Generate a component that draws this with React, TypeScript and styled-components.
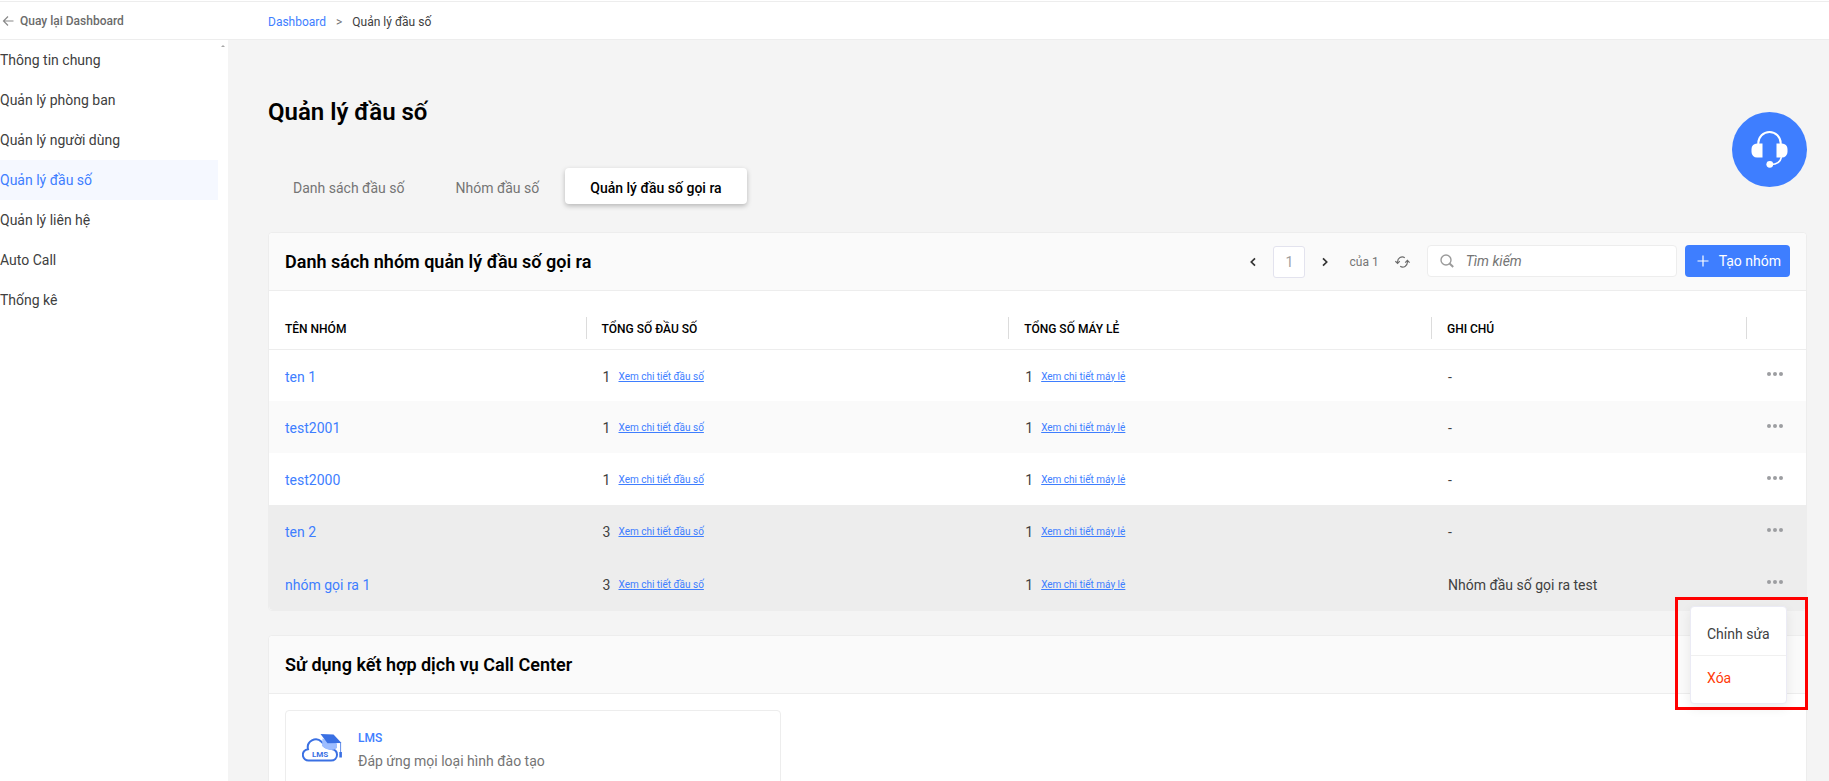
import React from "react";
import styled, { createGlobalStyle } from "styled-components";

const blue = "#3e7eff";
const line = "#ededed";

const GlobalStyle = createGlobalStyle`
  * { box-sizing: border-box; }
  body {
    margin: 0;
    background: #fff;
    color: #404040;
    font: 14px/20px Roboto, "Noto Sans", sans-serif;
  }
  button, input { font: inherit; color: inherit; margin: 0; padding: 0; border: 0; background: none; }
  button { cursor: pointer; }
  a { color: ${blue}; text-decoration: none; }
`;

const Page = styled.div`
  display: flex;
  flex-direction: column;
  height: 100vh;
  padding-top: 1px;
`;

const TopBar = styled.header`
  flex: none;
  display: flex;
  align-items: center;
  height: 39px;
  border-top: 1px solid ${line};
  border-bottom: 1px solid ${line};
  font-size: 12px;
`;

const BackLink = styled.a`
  display: flex;
  align-items: center;
  gap: 6px;
  width: 268px;
  padding-left: 2px;
  color: #6b6b6b;
  font-weight: 500;
`;

const Breadcrumb = styled.nav`
  display: flex;
  gap: 10px;
  padding-top: 2px;
  color: #404040;
`;

const Separator = styled.span`
  color: #757575;
`;

const Body = styled.div`
  flex: 1;
  display: flex;
  min-height: 0;
`;

const Sidebar = styled.nav`
  flex: none;
  display: flex;
  align-items: flex-start;
  width: 228px;
`;

const MenuList = styled.div`
  flex: 1;
`;

const MenuItem = styled.a<{ $active?: boolean }>`
  display: block;
  line-height: 40px;
  color: ${(p) => (p.$active ? blue : "#404040")};
  background: ${(p) => (p.$active ? "#f5f8ff" : "transparent")};
`;

const ScrollArrow = styled.span`
  width: 10px;
  padding: 5px 3px;
  svg { display: block; }
`;

const Main = styled.main`
  flex: 1;
  min-width: 0;
  overflow-y: auto;
  scrollbar-width: none;
  padding: 56px 22px 24px 40px;
  background: #f4f4f4;
`;

const Title = styled.h1`
  margin: 0;
  font-size: 24px;
  line-height: 32px;
  font-weight: 600;
  color: #000;
`;

const Tabs = styled.div`
  display: flex;
  gap: 1px;
  height: 40px;
  margin: 40px 0 24px;
`;

const Tab = styled.button<{ $active?: boolean }>`
  height: 36px;
  padding: 3px 25px 0;
  border-radius: 4px;
  color: ${(p) => (p.$active ? "#000" : "#757575")};
  font-weight: ${(p) => (p.$active ? 500 : 400)};
  background: ${(p) => (p.$active ? "#fff" : "transparent")};
  box-shadow: ${(p) => (p.$active ? "0 2px 5px rgba(0, 0, 0, 0.25)" : "none")};
`;

const Card = styled.section`
  margin-bottom: 24px;
  border: 1px solid ${line};
  border-radius: 4px;
  background: #fff;
`;

const CardHeader = styled.div`
  display: flex;
  align-items: center;
  justify-content: space-between;
  height: 58px;
  padding: 0 16px 1px;
  border-bottom: 1px solid ${line};
  border-radius: 4px 4px 0 0;
  background: #fafafa;
`;

const CardTitle = styled.h2`
  margin: 0;
  padding-top: 2px;
  font-size: 18px;
  line-height: 24px;
  font-weight: 600;
  color: #000;
`;

const Toolbar = styled.div`
  display: flex;
  align-items: flex-start;
  gap: 8px;
  height: 32px;
`;

const Pager = styled.div`
  display: flex;
  align-items: center;
  margin-right: 8px;
  padding-top: 1px;
  font-size: 12px;
  color: #757575;
`;

const IconButton = styled.button`
  display: flex;
  align-items: center;
  justify-content: center;
  width: 16px;
  height: 32px;
`;

const PageInput = styled.input`
  width: 32px;
  height: 32px;
  margin: 0 12px;
  border: 1px solid #e3e3ee;
  border-radius: 3px;
  background: #fff;
  font-size: 14px;
  text-align: center;
  color: #a0a0a0;
`;

const PageCount = styled.span`
  margin: 0 16px;
`;

const SearchBox = styled.label`
  display: flex;
  align-items: center;
  gap: 12px;
  width: 250px;
  height: 32px;
  padding: 0 12px;
  border: 1px solid ${line};
  border-radius: 4px;
  background: #fff;
`;

const SearchInput = styled.input`
  flex: 1;
  min-width: 0;
  outline: none;
  &::placeholder { color: #757575; font-style: italic; opacity: 1; }
`;

const PrimaryButton = styled.button`
  display: flex;
  align-items: center;
  gap: 10px;
  height: 32px;
  padding: 0 9px 0 12px;
  border-radius: 4px;
  background: ${blue};
  color: #fff;
`;

const Table = styled.table`
  width: 100%;
  table-layout: fixed;
  border-collapse: separate;
  border-spacing: 0;
`;

const HeadCell = styled.th`
  padding: 26px 0 10px;
  text-align: left;
`;

const HeadLabel = styled.div<{ $divided?: boolean }>`
  height: 22px;
  padding-left: 15px;
  border-left: 1px solid ${(p) => (p.$divided ? "#dcdcdc" : "transparent")};
  font-size: 12px;
  line-height: 24px;
  font-weight: 500;
  color: #000;
`;

const Row = styled.tr<{ $tone: string }>`
  background: ${(p) => p.$tone};
`;

const Cell = styled.td`
  position: relative;
  height: 52px;
  padding: 2px 0 0 17px;
  &:first-child { padding-left: 16px; }
  ${Row}:first-child & { border-top: 1px solid ${line}; }
  ${Row}:last-child & { height: 53px; }
  ${Row}:last-child &:first-child { border-bottom-left-radius: 4px; }
  ${Row}:last-child &:last-child { border-bottom-right-radius: 4px; }
`;

const Count = styled.span`
  display: flex;
  align-items: center;
  gap: 8px;
`;

const DetailLink = styled.a`
  font-size: 10px;
  text-decoration: underline;
`;

const MoreButton = styled.button`
  display: block;
  height: 20px;
  padding: 0 4px 6px;
  line-height: 0;
`;

const Highlight = styled.div`
  position: absolute;
  z-index: 2;
  top: 40px;
  right: -2px;
  padding: 6px 18px 3px 12px;
  border: 3px solid #f00;
`;

const Popup = styled.div`
  width: 97px;
  padding: 4px 0;
  border: 1px solid #ebebf5;
  border-radius: 4px;
  background: #fff;
  box-shadow: 0 4px 12px rgba(0, 0, 0, 0.08);
`;

const PopupItem = styled.button<{ $danger?: boolean }>`
  display: block;
  width: 100%;
  height: 44px;
  padding: 1px 16px 0;
  text-align: left;
  white-space: nowrap;
  color: ${(p) => (p.$danger ? "#ff3b0a" : "#404040")};
  & + & { border-top: 1px solid #f0f0f0; }
`;

const Services = styled.div`
  display: grid;
  grid-template-columns: repeat(3, 1fr);
  gap: 8px;
  padding: 16px;
`;

const Service = styled.a`
  display: flex;
  align-items: center;
  gap: 16px;
  padding: 16px;
  border: 1px solid ${line};
  border-radius: 4px;
`;

const ServiceLogo = styled.svg`
  flex: none;
  margin-bottom: 4px;
`;

const ServiceName = styled.strong`
  display: block;
  font-size: 12px;
  line-height: 22px;
  font-weight: 500;
`;

const ServiceText = styled.span`
  display: block;
  line-height: 24px;
  color: #757575;
`;

const SupportButton = styled.button`
  position: fixed;
  top: 112px;
  right: 22px;
  width: 75px;
  height: 75px;
  border-radius: 50%;
  background: ${blue};
  line-height: 0;
`;

const Chevron = ({ right }: { right?: boolean }) => (
  <svg width="6" height="10" viewBox="0 0 6 10" fill="none" stroke="#333" strokeWidth="1.7">
    <path d={right ? "M1 1.3 4.7 5 1 8.7" : "M5 1.3 1.3 5 5 8.7"} />
  </svg>
);

const Refresh = () => (
  <svg width="15" height="12" viewBox="0 0 15 12" fill="none" stroke="#6b6b6b" strokeWidth="1.2">
    <path d="M2.6 7V5.8A4.7 4.7 0 0 1 9.8 1.7M12.4 5v1.2a4.7 4.7 0 0 1-7.2 4.1" />
    <path d="M.4 5.2 2.6 7.4 4.8 5.2M10.2 6.6 12.4 4.4 14.6 6.6" />
  </svg>
);

const SearchIcon = () => (
  <svg width="14" height="14" viewBox="0 0 14 14" fill="none" stroke="#9b9b9b" strokeWidth="1.4">
    <circle cx="6" cy="6" r="5" />
    <path d="m9.6 9.6 3.6 3.4" strokeWidth="2" />
  </svg>
);

const Dots = () => (
  <svg width="16" height="4" viewBox="0 0 16 4" fill="#9c9ea1">
    <circle cx="2" cy="2" r="2" />
    <circle cx="8" cy="2" r="2" />
    <circle cx="14" cy="2" r="2" />
  </svg>
);

const Headset = () => (
  <svg width="37" height="37" viewBox="0 0 37 37" fill="#fff">
    <path d="M7.3 13V12.2A11 11 0 0 1 29.7 12.2V13" fill="none" stroke="#fff" strokeWidth="2" />
    <path d="M11.5 12.5v14H6A5.5 5.5 0 0 1 .5 21v-3A5.5 5.5 0 0 1 6 12.5zM25.5 12.5v14H31a5.5 5.5 0 0 0 5.5-5.5v-3a5.5 5.5 0 0 0-5.5-5.5z" />
    <path d="M30.500 26c-1 4.500-5 7.500-10.500 7.500" fill="none" stroke="#fff" strokeWidth="1.6" />
    <circle cx="18.8" cy="33.3" r="3.4" />
  </svg>
);

const LmsLogo = () => (
  <ServiceLogo width="40" height="30" viewBox="0 0 40 30">
    <path
      d="M8 27.500H7A5.600 5.600 0 0 1 6 16.200 8 8 0 0 1 19.500 8.800c2 1.200 3 3 3.500 5.200l6.500 2c3.500.5 5.500 2.700 5.500 5.700 0 3.500-2.600 5.800-6 5.800z"
      fill="#fff" stroke="#3a70e3" strokeWidth="2"
    />
    <path d="M20.500 5.500 35 10.500V15c-3.500 3-10.500 2.500-15-2z" fill="#9dbdff" />
    <path d="M18.500 1 31.500 1.500 39.500 10 25.500 10.200z" fill="#3a70e3" />
    <path d="M38.600 10v10" stroke="#3a70e3" strokeWidth="0.8" />
    <path d="M37.300 19h2.600v5.500h-2.600z" fill="#3a70e3" />
    <text x="10" y="24" fontSize="8" fontWeight="700" fontFamily="Roboto" fill="#3a70e3">LMS</text>
  </ServiceLogo>
);

const menu = [
  "Thông tin chung",
  "Quản lý phòng ban",
  "Quản lý người dùng",
  "Quản lý đầu số",
  "Quản lý liên hệ",
  "Auto Call",
  "Thống kê",
];

const tabs = ["Danh sách đầu số", "Nhóm đầu số", "Quản lý đầu số gọi ra"];

const columns = [
  { label: "TÊN NHÓM", width: "20.6%" },
  { label: "TỔNG SỐ ĐẦU SỐ", width: "27.5%" },
  { label: "TỔNG SỐ MÁY LẺ", width: "27.5%" },
  { label: "GHI CHÚ", width: "20.5%" },
  { label: "", width: "3.9%" },
];

const groups = [
  { name: "ten 1", numbers: 1, phones: 1, note: "-", tone: "#fff" },
  { name: "test2001", numbers: 1, phones: 1, note: "-", tone: "#fafafa" },
  { name: "test2000", numbers: 1, phones: 1, note: "-", tone: "#fff" },
  { name: "ten 2", numbers: 3, phones: 1, note: "-", tone: "#ededed" },
  { name: "nhóm gọi ra 1", numbers: 3, phones: 1, note: "Nhóm đầu số gọi ra test", tone: "#ededed", open: true },
];

export default function App() {
  return (
    <Page>
      <GlobalStyle />
      <TopBar>
        <BackLink href="#">
          <svg width="12" height="12" viewBox="0 0 12 12" fill="none" stroke="#8a8a8a" strokeWidth="1.2">
            <path d="M11.500 6H1.500M6 1.500 1.500 6 6 10.500" />
          </svg>
          Quay lại Dashboard
        </BackLink>
        <Breadcrumb>
          <a href="#">Dashboard</a>
          <Separator>&gt;</Separator>
          <span>Quản lý đầu số</span>
        </Breadcrumb>
      </TopBar>
      <Body>
        <Sidebar>
          <MenuList>
            {menu.map((item) => (
              <MenuItem key={item} href="#" $active={item === "Quản lý đầu số"}>{item}</MenuItem>
            ))}
          </MenuList>
          <ScrollArrow>
            <svg width="4" height="2" viewBox="0 0 4 2" fill="#a8a8a8"><path d="M2 0 4 2H0z" /></svg>
          </ScrollArrow>
        </Sidebar>
        <Main>
          <Title>Quản lý đầu số</Title>
          <Tabs>
            {tabs.map((tab, i) => <Tab key={tab} type="button" $active={i === 2}>{tab}</Tab>)}
          </Tabs>
          <Card>
            <CardHeader>
              <CardTitle>Danh sách nhóm quản lý đầu số gọi ra</CardTitle>
              <Toolbar>
                <Pager>
                  <IconButton type="button" aria-label="Trang trước"><Chevron /></IconButton>
                  <PageInput aria-label="Trang" defaultValue="1" />
                  <IconButton type="button" aria-label="Trang sau"><Chevron right /></IconButton>
                  <PageCount>của 1</PageCount>
                  <IconButton type="button" aria-label="Tải lại"><Refresh /></IconButton>
                </Pager>
                <SearchBox>
                  <SearchIcon />
                  <SearchInput aria-label="Tìm kiếm" placeholder="Tìm kiếm" />
                </SearchBox>
                <PrimaryButton type="button">
                  <svg width="12" height="12" viewBox="0 0 12 12" stroke="#fff" strokeWidth="1.2">
                    <path d="M6 .5v11M.5 6h11" />
                  </svg>
                  Tạo nhóm
                </PrimaryButton>
              </Toolbar>
            </CardHeader>
            <Table>
              <colgroup>
                {columns.map((c) => <col key={c.label} style={{ width: c.width }} />)}
              </colgroup>
              <thead>
                <tr>
                  {columns.map((c, i) => (
                    <HeadCell key={c.label} scope="col">
                      <HeadLabel $divided={i > 0}>{c.label}</HeadLabel>
                    </HeadCell>
                  ))}
                </tr>
              </thead>
              <tbody>
                {groups.map((g) => (
                  <Row key={g.name} $tone={g.tone}>
                    <Cell><a href="#">{g.name}</a></Cell>
                    <Cell><Count>{g.numbers}<DetailLink href="#">Xem chi tiết đầu số</DetailLink></Count></Cell>
                    <Cell><Count>{g.phones}<DetailLink href="#">Xem chi tiết máy lẻ</DetailLink></Count></Cell>
                    <Cell>{g.note}</Cell>
                    <Cell>
                      <MoreButton type="button" aria-label="Thao tác"><Dots /></MoreButton>
                      {g.open && (
                        <Highlight>
                          <Popup>
                            <PopupItem type="button">Chỉnh sửa</PopupItem>
                            <PopupItem type="button" $danger>Xóa</PopupItem>
                          </Popup>
                        </Highlight>
                      )}
                    </Cell>
                  </Row>
                ))}
              </tbody>
            </Table>
          </Card>
          <Card>
            <CardHeader>
              <CardTitle>Sử dụng kết hợp dịch vụ Call Center</CardTitle>
            </CardHeader>
            <Services>
              <Service href="#">
                <LmsLogo />
                <div>
                  <ServiceName>LMS</ServiceName>
                  <ServiceText>Đáp ứng mọi loại hình đào tạo</ServiceText>
                </div>
              </Service>
            </Services>
          </Card>
        </Main>
      </Body>
      <SupportButton type="button" aria-label="Hỗ trợ"><Headset /></SupportButton>
    </Page>
  );
}
